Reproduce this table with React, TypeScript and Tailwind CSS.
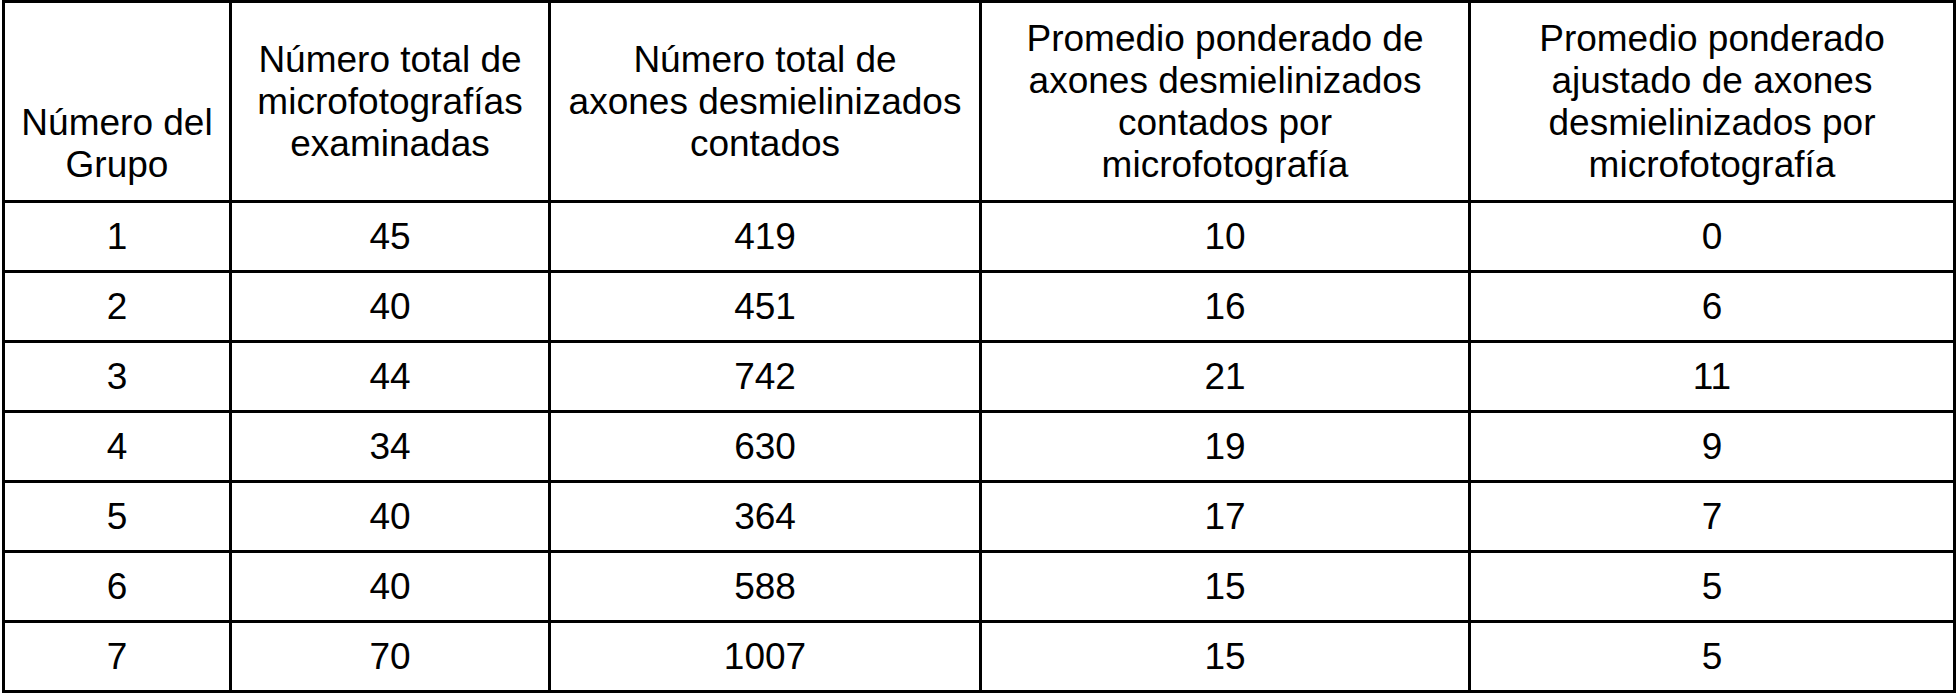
import React from "react";

const headers: { lines: string[]; bottom?: boolean }[] = [
  { lines: ["Número del", "Grupo"], bottom: true },
  { lines: ["Número total de", "microfotografías", "examinadas"] },
  { lines: ["Número total de", "axones desmielinizados", "contados"] },
  {
    lines: [
      "Promedio ponderado de",
      "axones desmielinizados",
      "contados por",
      "microfotografía",
    ],
  },
  {
    lines: [
      "Promedio ponderado",
      "ajustado de axones",
      "desmielinizados por",
      "microfotografía",
    ],
  },
];

const rows = [
  ["1", "45", "419", "10", "0"],
  ["2", "40", "451", "16", "6"],
  ["3", "44", "742", "21", "11"],
  ["4", "34", "630", "19", "9"],
  ["5", "40", "364", "17", "7"],
  ["6", "40", "588", "15", "5"],
  ["7", "70", "1007", "15", "5"],
];

export default function App() {
  return (
    <div className="bg-white w-[1957px] h-[693px] font-['Liberation_Sans',Arial,sans-serif] text-black">
      <div className="ml-[2px] w-[1954px] bg-black p-[3px] grid grid-cols-[224px_316px_428px_486px_482px] grid-rows-[197px_repeat(7,67px)] gap-[3px]">
        {headers.map((h, i) => (
          <div
            key={i}
            className={
              "bg-white flex flex-col items-center text-center text-[37px] leading-[42px] " +
              (h.bottom ? "justify-end pb-[14px]" : "justify-center")
            }
          >
            {h.lines.map((l) => (
              <span key={l} className="whitespace-nowrap">
                {l}
              </span>
            ))}
          </div>
        ))}
        {rows.map((r) =>
          r.map((c, j) => (
            <div
              key={r[0] + "-" + j}
              className="bg-white flex items-center justify-center text-[37px] leading-[42px]"
            >
              {c}
            </div>
          ))
        )}
      </div>
    </div>
  );
}
